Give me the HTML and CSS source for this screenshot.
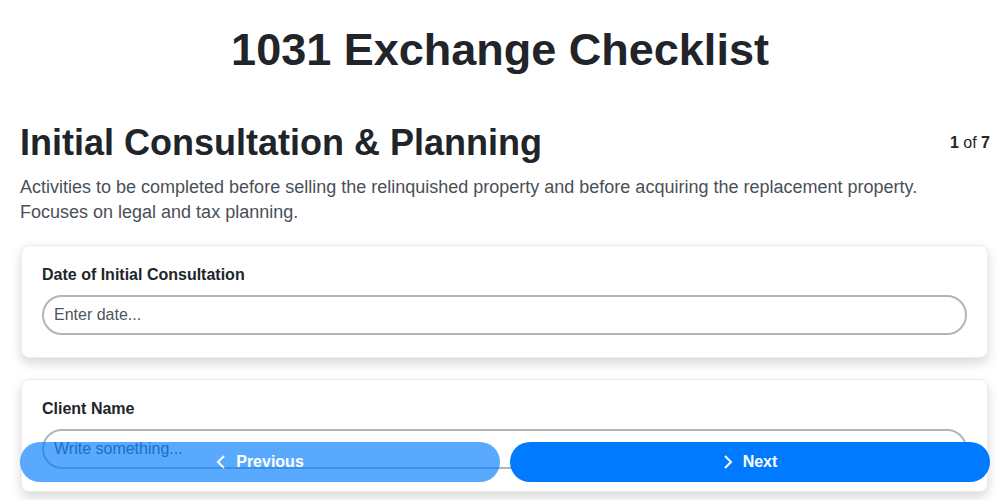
FILE: index.html
```html
<!DOCTYPE html>
<html lang="en">
<head>
    <meta charset="UTF-8">
    <meta name="viewport" content="width=device-width, initial-scale=1.0">
    <title>1031 Exchange Checklist</title>
    <link rel="stylesheet" href="styles.css">
</head>
<body>

<h1 class="page-title">1031 Exchange Checklist</h1>

<div class="step">
    <div class="step-head">
        <h2 class="step-title">Initial Consultation &amp; Planning</h2>
        <span class="step-count"><b>1</b> of <b>7</b></span>
    </div>
    <p class="step-desc">Activities to be completed before selling the relinquished property and before acquiring the replacement property. Focuses on legal and tax planning.</p>

    <!-- Fields for this step -->
    <div class="field-card">
        <label for="consult-date">Date of Initial Consultation</label>
        <input type="text" id="consult-date" class="field-input" placeholder="Enter date...">
    </div>

    <div class="field-card">
        <label for="client-name">Client Name</label>
        <input type="text" id="client-name" class="field-input" placeholder="Write something...">
    </div>
</div>

<div class="step-nav">
    <button class="nav-btn prev" disabled>
        <svg width="10" height="16" viewBox="0 0 10 16"><path d="M8 2 L2 8 L8 14" fill="none" stroke="#fff" stroke-width="2"/></svg>
        Previous
    </button>
    <button class="nav-btn next">
        <svg width="10" height="16" viewBox="0 0 10 16"><path d="M2 2 L8 8 L2 14" fill="none" stroke="#fff" stroke-width="2"/></svg>
        Next
    </button>
</div>

</body>
</html>
```

FILE: styles.css
```css
body {
    margin: 0;
    padding: 0 10px 80px 20px;
    font-family: "Liberation Sans", Arial, sans-serif;
    color: #212529;
    background-color: #fff;
}
.page-title {
    margin: 0 0 0 -10px;
    padding-top: 26px;
    font-size: 45px;
    line-height: 48px;
    text-align: center;
}
.step-head {
    display: flex;
    justify-content: space-between;
    align-items: center;
    margin-top: 48px;
}
.step-title {
    margin: 0;
    font-size: 36px;
    line-height: 42px;
}
.step-count {
    font-size: 16px;
}
.step-desc {
    margin: 11px 0 20px;
    font-size: 18px;
    line-height: 25px;
    color: #495057;
}
.field-card {
    margin: 0 2px 21px 1px;
    padding: 20px 20px 22px;
    background-color: #fff;
    border: 1px solid #ececf1;
    border-radius: 8px;
    box-shadow: 0 5px 12px rgba(0, 0, 0, 0.16);
}
.field-card label {
    display: block;
    font-size: 16px;
    font-weight: bold;
    line-height: 18px;
    margin-bottom: 11px;
}
.field-input {
    display: block;
    box-sizing: border-box;
    width: 100%;
    height: 40px;
    padding: 0 10px;
    font-family: "Liberation Sans", Arial, sans-serif;
    font-size: 16px;
    color: #212529;
    border: 2px solid #adb5bd;
    border-radius: 20px;
    outline: none;
}
.field-input::placeholder {
    color: #4d5562;
}
.step-nav {
    position: fixed;
    left: 20px;
    right: 10px;
    bottom: 18px;
    display: flex;
    gap: 10px;
}
.nav-btn {
    flex: 1;
    height: 40px;
    display: flex;
    align-items: center;
    justify-content: center;
    gap: 10px;
    font-family: "Liberation Sans", Arial, sans-serif;
    font-size: 16px;
    font-weight: bold;
    color: #fff;
    background-color: #007bff;
    border: none;
    border-radius: 20px;
    cursor: pointer;
}
.nav-btn.prev {
    opacity: 0.65;
    cursor: default;
}
```
